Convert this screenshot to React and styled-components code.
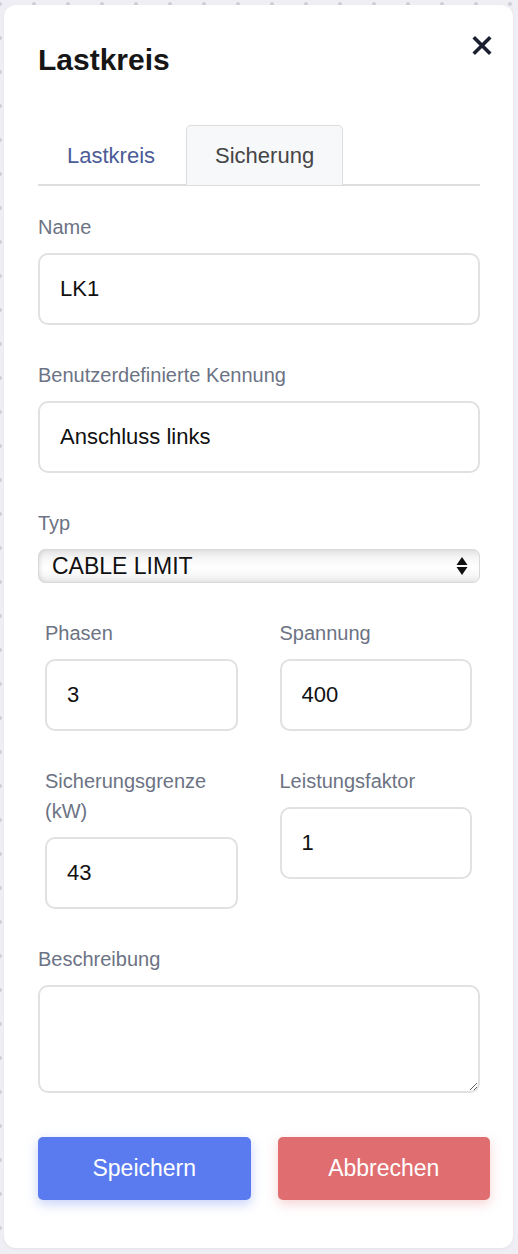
import { useState } from "react";
import styled, { createGlobalStyle } from "styled-components";

const GlobalStyle = createGlobalStyle`
  * {
    box-sizing: border-box;
  }
  html,
  body {
    margin: 0;
    padding: 0;
  }
  body {
    min-height: 1254px;
    font-family: "Liberation Sans", Arial, Helvetica, sans-serif;
    background-color: #eeeef4;
    background-image: radial-gradient(circle, #cfd0d8 1.6px, transparent 2.2px);
    background-size: 34px 34px;
    background-position: -17px -13px;
  }
`;

const Panel = styled.div`
  margin: 5px 5px 0 4px;
  width: 509px;
  background: #fff;
  border-radius: 12px;
  padding: 37px 33px 48px 34px;
  box-shadow: 0 1px 3px rgba(20, 20, 40, 0.05);
`;

const Header = styled.div`
  display: flex;
  justify-content: space-between;
  align-items: flex-start;
`;

const Title = styled.h2`
  margin: 0;
  font-size: 30px;
  line-height: 36px;
  font-weight: 700;
  color: #161616;
`;

const CloseButton = styled.button`
  display: flex;
  border: none;
  background: none;
  padding: 0;
  margin: -7px -12px 0 0;
  cursor: pointer;
  color: #1a2030;
`;

const TabList = styled.div`
  display: flex;
  margin-top: 47px;
  border-bottom: 2px solid #dedede;
`;

const Tab = styled.button`
  height: 60px;
  padding: 0 28px;
  margin: 0 2px -1px 0;
  font-family: inherit;
  font-size: 22px;
  border: 1px solid ${({ $active }) => ($active ? "#dddddd" : "transparent")};
  border-bottom: none;
  border-radius: 5px 5px 0 0;
  background: ${({ $active }) => ($active ? "#f7f8fa" : "transparent")};
  color: ${({ $active }) => ($active ? "#454545" : "#4c5c98")};
  cursor: pointer;
`;

const Form = styled.form`
  display: flex;
  flex-direction: column;
  gap: 35px;
  margin-top: 26px;
`;

const Grid = styled.div`
  display: grid;
  grid-template-columns: 1fr 1fr;
  column-gap: 42px;
  row-gap: 35px;
  align-items: start;
  padding: 0 8px 0 7px;
`;

const Field = styled.label`
  display: flex;
  flex-direction: column;
`;

const Label = styled.span`
  font-size: 20px;
  line-height: 30px;
  color: #6c7384;
  margin-bottom: 11px;
`;

const Input = styled.input`
  width: 100%;
  height: 72px;
  padding: 0 20px;
  font-family: inherit;
  font-size: 22px;
  color: #111;
  border: 2px solid #e1e1e1;
  border-radius: 10px;
  outline: none;
  background: #fff;
`;

const SelectWrap = styled.div`
  position: relative;
`;

const Select = styled.select`
  appearance: none;
  width: 100%;
  height: 34px;
  padding: 0 40px 0 13px;
  font-family: inherit;
  font-size: 23px;
  color: #111;
  border: 1px solid #d9d9d9;
  border-radius: 7px;
  outline: none;
  background: linear-gradient(
    #e3e3e3 0%,
    #f6f6f6 25%,
    #ffffff 55%,
    #f7f7f7 80%,
    #e8e8e8 100%
  );
  box-shadow: inset 3px 0 4px -2px rgba(0, 0, 0, 0.12);
`;

const SelectArrows = styled.svg`
  position: absolute;
  right: 12px;
  top: 7px;
  pointer-events: none;
`;

const TextArea = styled.textarea`
  width: 100%;
  height: 108px;
  padding: 12px 20px;
  font-family: inherit;
  font-size: 22px;
  border: 2px solid #e1e1e1;
  border-radius: 10px;
  outline: none;
  resize: vertical;
  display: block;
`;

const Actions = styled.div`
  display: grid;
  grid-template-columns: 1fr 1fr;
  column-gap: 27px;
  margin: 9px -10px 0 0;
`;

const ActionButton = styled.button`
  height: 63px;
  border: none;
  border-radius: 5px;
  font-family: inherit;
  font-size: 23px;
  color: #fff;
  cursor: pointer;
  background: ${({ $variant }) => ($variant === "danger" ? "#e06d6f" : "#5a7bef")};
  box-shadow: 0 4px 12px
    ${({ $variant }) =>
      $variant === "danger" ? "rgba(224, 109, 111, 0.3)" : "rgba(90, 123, 239, 0.35)"};
`;

const App = () => {
  const [tab, setTab] = useState("sicherung");
  const [values, setValues] = useState({
    name: "LK1",
    kennung: "Anschluss links",
    typ: "CABLE_LIMIT",
    phasen: "3",
    spannung: "400",
    grenze: "43",
    faktor: "1",
    beschreibung: "",
  });

  const update = (key) => (e) => setValues({ ...values, [key]: e.target.value });

  return (
    <>
      <GlobalStyle />
      <Panel>
        <Header>
          <Title>Lastkreis</Title>
          <CloseButton type="button" aria-label="Schließen">
            <svg width="20" height="21" viewBox="0 0 20 21">
              <path
                d="M3 3.5 L17 17.5 M17 3.5 L3 17.5"
                stroke="currentColor"
                strokeWidth="3.6"
                strokeLinecap="square"
              />
            </svg>
          </CloseButton>
        </Header>

        <TabList>
          <Tab $active={tab === "lastkreis"} onClick={() => setTab("lastkreis")}>
            Lastkreis
          </Tab>
          <Tab $active={tab === "sicherung"} onClick={() => setTab("sicherung")}>
            Sicherung
          </Tab>
        </TabList>

        <Form onSubmit={(e) => e.preventDefault()}>
          <Field>
            <Label>Name</Label>
            <Input value={values.name} onChange={update("name")} />
          </Field>

          <Field>
            <Label>Benutzerdefinierte Kennung</Label>
            <Input value={values.kennung} onChange={update("kennung")} />
          </Field>

          <Field as="div">
            <Label>Typ</Label>
            <SelectWrap>
              <Select value={values.typ} onChange={update("typ")}>
                <option value="CABLE_LIMIT">CABLE LIMIT</option>
                <option value="FUSE">FUSE</option>
              </Select>
              <SelectArrows width="12" height="20" viewBox="0 0 12 20">
                <path d="M6 1 L11.5 9 H0.5 Z M6 19 L0.5 11 H11.5 Z" fill="#111" />
              </SelectArrows>
            </SelectWrap>
          </Field>

          <Grid>
            <Field>
              <Label>Phasen</Label>
              <Input value={values.phasen} onChange={update("phasen")} />
            </Field>
            <Field>
              <Label>Spannung</Label>
              <Input value={values.spannung} onChange={update("spannung")} />
            </Field>
            <Field>
              <Label>Sicherungsgrenze (kW)</Label>
              <Input value={values.grenze} onChange={update("grenze")} />
            </Field>
            <Field>
              <Label>Leistungsfaktor</Label>
              <Input value={values.faktor} onChange={update("faktor")} />
            </Field>
          </Grid>

          <Field>
            <Label>Beschreibung</Label>
            <TextArea value={values.beschreibung} onChange={update("beschreibung")} />
          </Field>

          <Actions>
            <ActionButton type="submit">Speichern</ActionButton>
            <ActionButton type="button" $variant="danger">
              Abbrechen
            </ActionButton>
          </Actions>
        </Form>
      </Panel>
    </>
  );
};

export default App;
